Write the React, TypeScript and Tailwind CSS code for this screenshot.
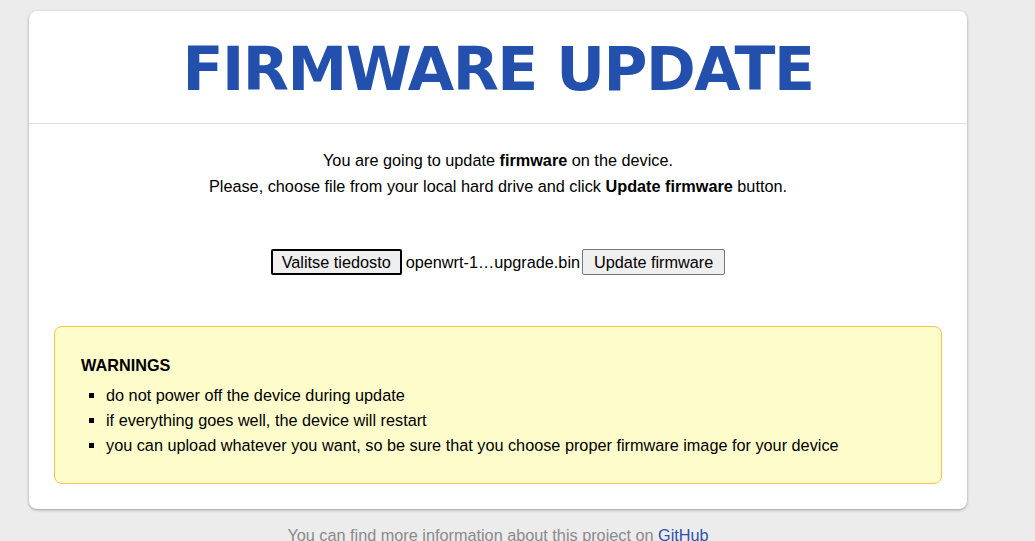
import React from "react";

export default function App() {
  return (
    <div className="min-h-screen bg-[#ececec] font-['Liberation_Sans',Arial,sans-serif] text-[16.25px] text-black">
      <div className="ml-[29px] pt-[11px] w-[938px]">
        <div className="bg-white rounded-[8px] shadow-[0_1px_3px_rgba(0,0,0,0.35)]">
          <div className="h-[113px] flex items-center justify-center border-b border-[#e3e3e3]">
            <h1 className="font-['DejaVu_Sans',Verdana,sans-serif] font-bold text-[60px] tracking-[-1.5px] leading-none text-[#2350ad] pt-[4px]">
              FIRMWARE UPDATE
            </h1>
          </div>
          <div className="px-[25px] pb-[25px]">
            <div className="pt-[23px] text-center leading-[26px]">
              <p>
                You are going to update <b>firmware</b> on the device.
              </p>
              <p>
                Please, choose file from your local hard drive and click <b>Update firmware</b> button.
              </p>
            </div>
            <div className="mt-[50px] flex items-center justify-center h-[26px]">
              <button className="h-[26px] px-[9px] bg-[#efefef] border-2 border-black rounded-[2px] leading-none">
                Valitse tiedosto
              </button>
              <span className="ml-[4px]">openwrt-1…upgrade.bin</span>
              <button className="ml-[2px] h-[26px] px-[11px] bg-[#efefef] border border-[#767676] rounded-[2px] leading-none">
                Update firmware
              </button>
            </div>
            <div className="mt-[51px] bg-[#fffccc] border border-[#f3c54d] rounded-[8px] px-[26px] pt-[26px] pb-[25px]">
              <h3 className="font-bold leading-[24px]">WARNINGS</h3>
              <ul className="mt-[6px] list-[square] pl-[25px] leading-[25px]">
                <li>do not power off the device during update</li>
                <li>if everything goes well, the device will restart</li>
                <li>you can upload whatever you want, so be sure that you choose proper firmware image for your device</li>
              </ul>
            </div>
          </div>
        </div>
        <p className="mt-[17px] text-center leading-[18px] text-[#8a8a8a]">
          You can find more information about this project on{" "}
          <a className="text-[#2f4fad]">GitHub</a>
        </p>
      </div>
    </div>
  );
}
